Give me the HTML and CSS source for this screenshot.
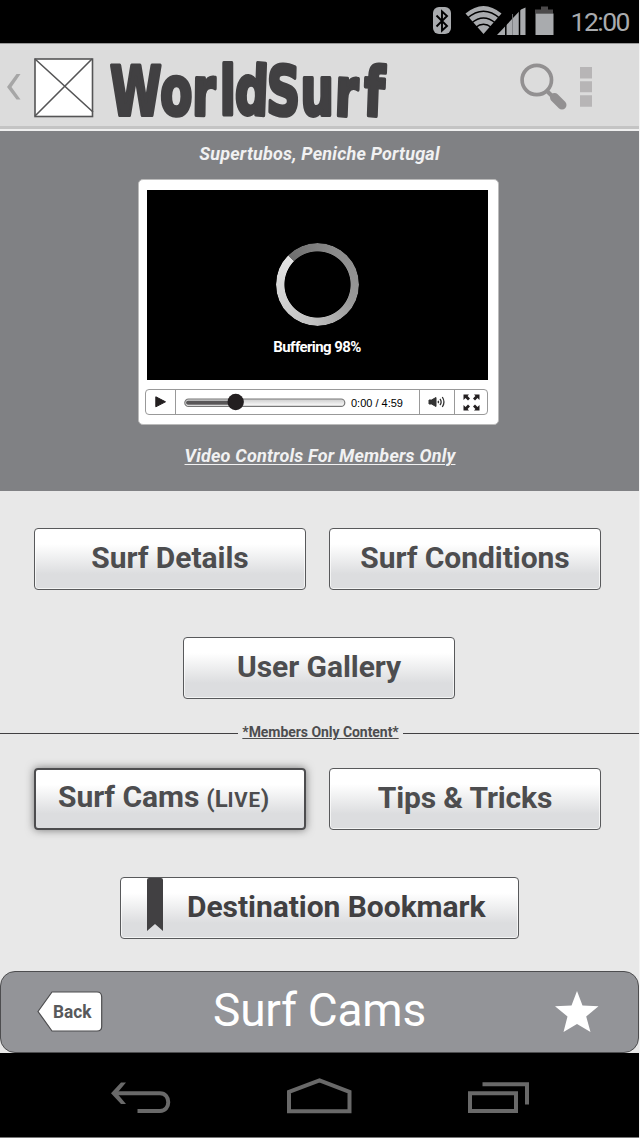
FILE: index.html
```html
<!DOCTYPE html>
<html lang="en">
<head>
<meta charset="utf-8">
<title>WorldSurf</title>
<link rel="stylesheet" href="styles.css">
</head>
<body>
<div class="screen">
  <div class="status">
    <svg class="status-icons" width="125" height="43" viewBox="0 0 125 43">
      <rect x="1" y="7" width="18" height="27" rx="6" fill="#a9abae"/>
      <path d="M4.500 15.500L15 26l-5 4.500v-19l5 4.500L4.500 26.500" fill="none" stroke="#000" stroke-width="1.900"/>
      <path d="M33.500 13.500Q51.500-1.500 69.500 13.500L51.500 34z" fill="#a9abae"/>
      <path d="M35 18.500Q51.500 4 68 18.500M39.500 23Q51.500 13 63.500 23M43.500 27.500Q51.500 21 59.500 27.500" fill="none" stroke="#000" stroke-width="1.500"/>
      <path d="M65 35L89 9.500L93.500 7.500V35z" fill="#a9abae"/>
      <path d="M73.800 20v16M87.500 7v29" stroke="#000" stroke-width="1.500"/>
      <path d="M80.500 14v21" stroke="#77797b" stroke-width=".8"/>
      <path d="M109 6.500h7v3h5v4h-18v-4h6z" fill="#4b494a"/>
      <rect x="103.500" y="13.500" width="18" height="21.500" fill="#a9abae"/>
    </svg>
    <span class="clock">12:00</span>
  </div>
  <header class="header">
    <svg class="chevron" width="14" height="26" viewBox="0 0 14 26"><path d="M0 13L9.500 0H13.500L4.500 13l9 12.500H9.500z" fill="#a6a6a6"/></svg>
    <svg class="logo" width="60" height="60" viewBox="0 0 60 60"><rect x="1" y="1" width="57.500" height="57.500" fill="#fff" stroke="#555556" stroke-width="1.600"/><path d="M1 1L59 54M1 58L58 1" stroke="#555556" stroke-width="1.600"/></svg>
    <svg class="brand" width="296" height="87" viewBox="0 0 296 87">
      <g transform="scale(.69 1)"><text class="brand-text" x="0 72 119 159 180 226 276 325 367" y="71 70 71 71 69 70 71 71 71" rotate="0 2 1 0 3 2 0 3 3">WorldSurf</text></g>
    </svg>
    <svg class="header-icons" width="76" height="50" viewBox="0 0 76 50">
      <circle cx="16.800" cy="18" r="14.700" fill="none" stroke="#929091" stroke-width="3.700"/>
      <path d="M27 29l5 5" stroke="#929091" stroke-width="4"/>
      <path d="M34.500 35.500l7.500 7.500" stroke="#929091" stroke-width="9" stroke-linecap="round"/>
      <path d="M60 5h12v11.500H60zM60 19.200h12v11H60zM60 33.200h12v11.500H60z" fill="#b7b5b6"/>
    </svg>
  </header>
  <section class="video">
    <h1 class="place">Supertubos, Peniche Portugal</h1>
    <div class="player">
      <div class="stage">
        <div class="spinner"></div>
        <span class="buffering">Buffering 98%</span>
      </div>
      <div class="controls">
        <div class="play"><svg width="12" height="12" viewBox="0 0 12 12"><path d="M.8 .8L10.500 5.800L.8 10.800z" fill="#231f20" stroke="#231f20" stroke-linejoin="round"/></svg></div>
        <div class="progress">
          <svg width="162" height="18" viewBox="0 0 162 18">
            <defs><linearGradient id="track" x2="0" y2="1"><stop stop-color="#ccc"/><stop offset="1" stop-color="#fff"/></linearGradient></defs>
            <rect x=".8" y="6" width="160" height="7.400" rx="3.700" fill="url(#track)" stroke="#777" stroke-width="1.200"/>
            <path d="M4 9.700h48" stroke="#595758" stroke-width="4" stroke-linecap="round"/>
            <circle cx="51.700" cy="9" r="8.200" fill="#231f20"/>
          </svg>
          <span class="time">0:00 / 4:59</span>
        </div>
        <div class="volume"><svg width="18" height="14" viewBox="0 0 18 14"><path d="M1 5h2.500L8 2.500v9L3.500 9H1z" fill="#333" stroke="#333" stroke-linejoin="round"/><path d="M10 5.800q1 1.200 0 2.400M12 4q2.300 3 0 6M14.300 2q3.300 5 0 10" fill="none" stroke="#333" stroke-width="1.300"/></svg></div>
        <div class="full"><svg width="17" height="17" viewBox="0 0 17 17"><path id="arr" d="M.5 .5H6L4.600 2 7 4.400 5 6.400 2.500 4 .5 6z" fill="#231f20"/><use href="#arr" transform="matrix(-1 0 0 1 17 0)"/><use href="#arr" transform="matrix(1 0 0 -1 0 17)"/><use href="#arr" transform="matrix(-1 0 0 -1 17 17)"/></svg></div>
      </div>
    </div>
    <a class="members-link">Video Controls For Members Only</a>
  </section>
  <main class="content">
    <div class="row"><button class="btn">Surf Details</button><button class="btn">Surf Conditions</button></div>
    <div class="row row-gallery"><button class="btn gallery">User Gallery</button></div>
    <div class="divider"><span class="members">*Members Only Content*</span></div>
    <div class="row"><button class="btn active"><span class="cams">Surf Cams</span><span class="live">(L<small class="cap">IVE</small>)</span></button><button class="btn tips">Tips &amp; Tricks</button></div>
    <div class="row row-bookmark"><button class="btn bookmark"><svg class="ribbon" width="16" height="53" viewBox="0 0 16 53"><path d="M0 2Q0 0 2 0H14Q16 0 16 2V53L8 46L0 53z" fill="#414042"/></svg><span>Destination Bookmark</span></button></div>
  </main>
  <footer class="tabbar">
    <div class="back"><svg width="66" height="42" viewBox="0 0 66 42"><path d="M1 20.500L15 1H60Q64.700 1 64.700 6V35.500Q64.700 40 60 40H15z" fill="#fff" stroke="#4d4d4f" stroke-width="1.200"/><text class="back-text" x="16" y="27" textLength="38.500" lengthAdjust="spacingAndGlyphs">Back</text></svg></div>
    <h2 class="title">Surf Cams</h2>
    <svg class="star" width="44" height="42" viewBox="0 0 44 42"><path d="M22 0L27.500 14.500L43.500 15.200L31.200 25.500L35.500 41L22 33L8.500 41L12.500 25.500L0 15.200L16.500 14.500z" fill="#fff"/></svg>
  </footer>
  <nav class="nav">
    <svg width="420" height="38" viewBox="0 0 420 38" fill="none" stroke="#696969" stroke-width="4">
      <path d="M4 15.300H49C60 15.300 60 33 49 33H26.500"/><path d="M0 15.300L10 4.500H15L6 15.300L15 26H10z" fill="#696969" stroke="none"/>
      <path d="M178 33.200V14L208.500 2.500L238.500 14V33.200z"/>
      <path d="M359 15.300h46V33H359zM371.500 6.300H416V26.500"/>
    </svg>
  </nav>
</div>
</body>
</html>
```
FILE: styles.css
```css
* { box-sizing: border-box; }
body { margin: 0; background: #f4f4f4; font-family: Roboto, "Liberation Sans", sans-serif; color: #4d4d4f; }
.screen { width: 639px; height: 1138px; display: flex; flex-direction: column; background: #e8e8e8; overflow: hidden; }
.status { height: 44px; background: #000; border-bottom: 1px solid #999; display: flex; justify-content: flex-end; padding-right: 10px; flex: none; }
.clock { width: 61px; margin-left: 11px; font-size: 26.500px; line-height: 43px; letter-spacing: -1.500px; color: #a9abae; white-space: nowrap; text-align: right; }
.header { height: 87px; flex: none; display: flex; align-items: flex-start; background: linear-gradient(#dcdcdc 82px, #c4c4c4 82px, #c4c4c4 85px, #efefef 85px); }
.chevron { margin: 30px 0 0 7px; }
.logo { margin: 14px 0 0 13px; }
.brand { margin: 0 0 0 16px; overflow: visible; }
.brand-text { font: bold 68px "DejaVu Sans", sans-serif; fill: #414042; stroke: #414042; stroke-width: 4px; stroke-linejoin: round; }
.header-icons { margin: 18px 0 0 114px; }
.video { height: 360px; flex: none; background: #808184; display: flex; flex-direction: column; align-items: center; }
.place, .members-link { margin: 0; font-size: 18px; line-height: 22px; font-weight: bold; font-style: italic; letter-spacing: .2px; color: #f1f1f2; }
.place { margin-top: 12px; }
.player { width: 361px; height: 246px; margin: 14px 2px 0 0; flex: none; padding: 10px 10px 0 8px; background: #fff; border: 1px solid #bbb; border-radius: 5px; }
.stage { width: 341px; height: 190px; background: #000; display: flex; flex-direction: column; align-items: center; color: #fff; }
.spinner { width: 83px; height: 83px; margin-top: 53px; border-radius: 50%; background: conic-gradient(from -45deg, #6e6e6e, #8b8b8b 20%, #999 45%, #c2c2c2 65%, #e4e4e4); mask: radial-gradient(circle, transparent 32.700px, #000 33.500px); }
.buffering { margin: 12px 1px 0 0; font-size: 15px; line-height: 18px; font-weight: bold; letter-spacing: -.600px; }
.controls { width: 343px; height: 26px; margin: 9px 0 0 -2px; border: 1px solid #999; border-radius: 4px; display: flex; }
.controls > div { display: flex; align-items: center; justify-content: center; }
.play { width: 30px; border-right: 1px solid #999; }
.progress { width: 244px; border-right: 1px solid #999; }
.controls > .progress { justify-content: flex-start; padding-left: 8px; }
.time { margin: 2px 0 0 5px; font: 11px "Liberation Sans", Arial, sans-serif; color: #000; white-space: nowrap; }
.volume { width: 35px; border-right: 1px solid #999; }
.full { flex: 1; }
.members-link { margin: 20px 0 0 1px; text-decoration: underline; text-decoration-thickness: 1px; text-underline-offset: 2px; }
.content { height: 480px; flex: none; padding-top: 37px; }
.row { display: flex; gap: 23px; padding-left: 34px; }
.btn { width: 272px; height: 62px; padding: 0 0 4px; display: flex; align-items: center; justify-content: center; font: bold 30px Roboto, sans-serif; letter-spacing: -.05px; color: #4d4d4f; border: 1px solid #58595b; border-radius: 4px; background: linear-gradient(#fff 25%, #dcdddf 75%); box-shadow: inset 0 0 0 1px #ffffffaa; white-space: nowrap; }
.row-gallery { margin-top: 47px; padding-left: 183px; }
.divider { height: 20px; margin-top: 24px; display: flex; align-items: center; gap: 4px; }
.divider::before, .divider::after { content: ""; height: 1px; background: #414042; }
.divider::before { width: 238px; }
.divider::after { flex: 1; }
.members { width: 157px; padding-bottom: 2px; font-size: 14px; line-height: 18px; font-weight: bold; letter-spacing: -.05px; color: #4d4d4f; text-align: center; white-space: nowrap; text-decoration: underline; text-decoration-thickness: 1px; }
.divider + .row { margin-top: 25px; }
.active { border: 2px solid #4d4d4f; box-shadow: 0 0 8px #777; align-items: baseline; padding: 9px 13px 2px 0; }
.live { font-size: 24px; margin-left: 7px; }
.cap { font-size: 20.500px; letter-spacing: .7px; }
.tips { letter-spacing: -.15px; }
.row-bookmark { margin-top: 47px; padding-left: 120px; }
.bookmark { width: 399px; color: #414042; justify-content: flex-start; padding-left: 26px; }
.ribbon { margin-right: 24px; align-self: flex-start; }
.tabbar { height: 82px; flex: none; display: flex; align-items: center; justify-content: space-between; padding: 0 39px 0 36px; background: #939498; border: 1px solid #4d4d4f; border-radius: 15px; }
.back { height: 42px; }
.back-text { font: bold 18px Roboto, sans-serif; fill: #58595b; }
.title { margin: 0 19px 4px 0; color: #fff; font-size: 46px; font-weight: normal; line-height: 54px; letter-spacing: -.25px; }
.nav { flex: 1; background: #000; border-bottom: 1px solid #777; display: flex; padding: 25px 0 0 111px; }
```
